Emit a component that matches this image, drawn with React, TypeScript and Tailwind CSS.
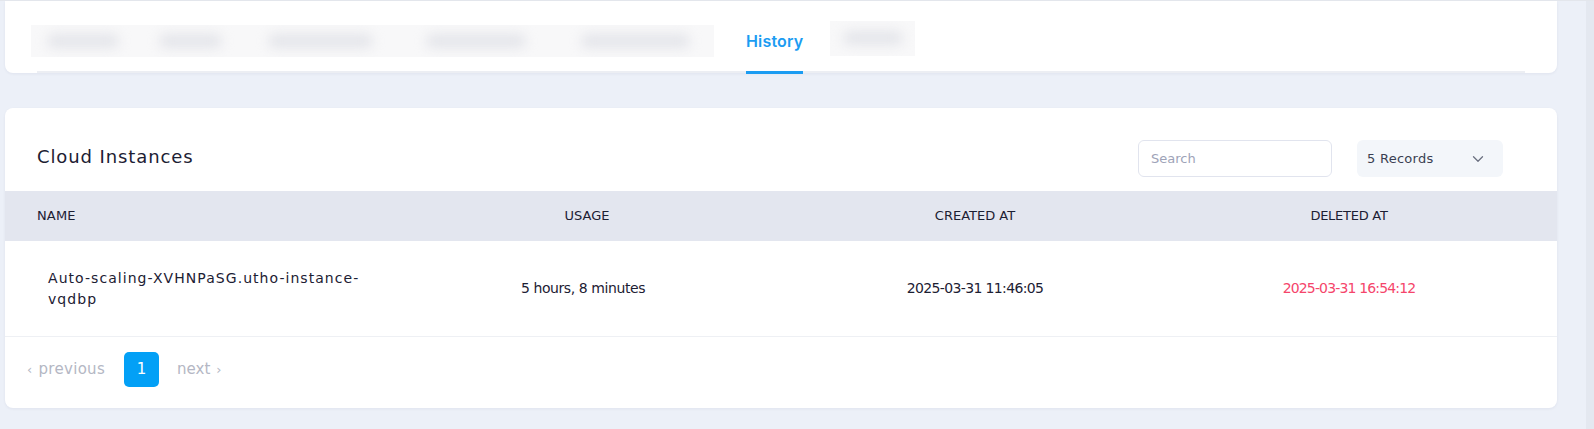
import React from 'react';

const blurred = [
  { w: 'w-[104px]' },
  { w: 'w-[90px]' },
  { w: 'w-[150px]' },
  { w: 'w-[142px]' },
  { w: 'w-[157px]' },
];

function BlurTab({ width }: { width: string }) {
  return (
    <div className={`h-[32px] ${width} flex items-center justify-center`}>
      <div className="h-[14px] w-[70%] rounded-full bg-[#e4e5ea] blur-[6px]" />
    </div>
  );
}

export default function App() {
  return (
    <div className="flex h-[429px] overflow-hidden bg-[#ecf0f8] font-['DejaVu_Sans',sans-serif] border-t border-[#e3e6ec]">
      <div className="flex-1 min-w-0 pl-[5px] pr-[29px]">
        {/* tabs card */}
        <div className="bg-white rounded-b-lg shadow-[0_1px_3px_rgba(30,40,80,0.06)] px-8 pt-[10px] h-[72px]">
          <div className="flex items-stretch h-[62px] border-b-2 border-[#eceef3]">
            <div className="-ml-[6px] self-center flex items-center gap-[10px] bg-[#f8f8f9] h-[32px] overflow-hidden">
              {blurred.map((b, i) => (
                <BlurTab key={i} width={b.w} />
              ))}
            </div>
            <div className="ml-[32px] relative flex items-center">
              <span className="text-[16px] font-semibold font-['Inter',sans-serif] text-[#1b9cf2] tracking-[0.01em]">History</span>
              <div className="absolute left-0 right-0 -bottom-[3px] h-[3px] bg-[#1b9cf2]" />
            </div>
            <div className="ml-[27px] self-center -mt-[6px] h-[35px] w-[85px] bg-[#f8f8f9] flex items-center justify-center overflow-hidden">
              <div className="h-[14px] w-[60px] rounded-full bg-[#e4e5ea] blur-[6px]" />
            </div>
          </div>
        </div>

        {/* instances card */}
        <div className="mt-[35px] bg-white rounded-lg shadow-[0_1px_3px_rgba(30,40,80,0.06)] overflow-hidden">
          <div className="flex items-center justify-between pl-8 pr-[54px] pt-8 pb-[14px]">
            <h2 className="text-[18px] text-[#1c2033] tracking-[0.05em] -mt-1">Cloud Instances</h2>
            <div className="flex items-center gap-[25px]">
              <input
                placeholder="Search"
                className="w-[194px] h-[37px] rounded-md border border-[#e1e4ee] px-3 text-[13px] text-[#1c2033] placeholder:text-[#9ea3b8] outline-none"
              />
              <div className="w-[146px] h-[37px] rounded-md bg-[#f3f6fa] flex items-center justify-between pl-[10px] pr-[16px]">
                <span className="text-[13px] text-[#3a3f52] tracking-[0.02em]">5 Records</span>
                <svg width="18" height="18" viewBox="0 0 24 24" fill="none" stroke="#6b7080" strokeWidth="1.7" strokeLinecap="round" strokeLinejoin="round">
                  <path d="m6 9 6 6 6-6" />
                </svg>
              </div>
            </div>
          </div>

          <div className="grid grid-cols-4 h-[50px] bg-[#e3e6ef] items-center text-[13px] text-[#1c2033] uppercase">
            <div className="pl-8 tracking-[0.01em]">Name</div>
            <div className="text-center">Usage</div>
            <div className="text-center">Created At</div>
            <div className="text-center pr-[28px] -tracking-[0.02em]">Deleted At</div>
          </div>

          <div className="grid grid-cols-4 h-[96px] items-center border-b border-[#eef0f4] text-[14px] text-[#1c2033]">
            <div className="pl-[43px] pr-[10px] leading-[21px] tracking-[0.075em] break-words">Auto-scaling-XVHNPaSG.utho-instance-vqdbp</div>
            <div className="text-center pr-[8px] -tracking-[0.03em]">5 hours, 8 minutes</div>
            <div className="text-center -tracking-[0.045em]">2025-03-31 11:46:05</div>
            <div className="text-center pr-[28px] -tracking-[0.06em] text-[#f5456b]">2025-03-31 16:54:12</div>
          </div>

          <div className="flex items-center pl-[22px] pt-[15px] pb-[21px] text-[15px] text-[#b4b7c4]">
            <span className="flex items-center gap-[6px] tracking-[0.02em]">
              <span className="text-[13px]">&lsaquo;</span>previous
            </span>
            <span className="ml-[19px] w-[35px] h-[35px] rounded-[5px] bg-[#03a0f6] text-white flex items-center justify-center">1</span>
            <span className="ml-[18px] flex items-center gap-[6px]">
              next<span className="text-[13px]">&rsaquo;</span>
            </span>
          </div>
        </div>
      </div>
      <div className="w-[8px] bg-[#e4e8f0]" />
    </div>
  );
}
